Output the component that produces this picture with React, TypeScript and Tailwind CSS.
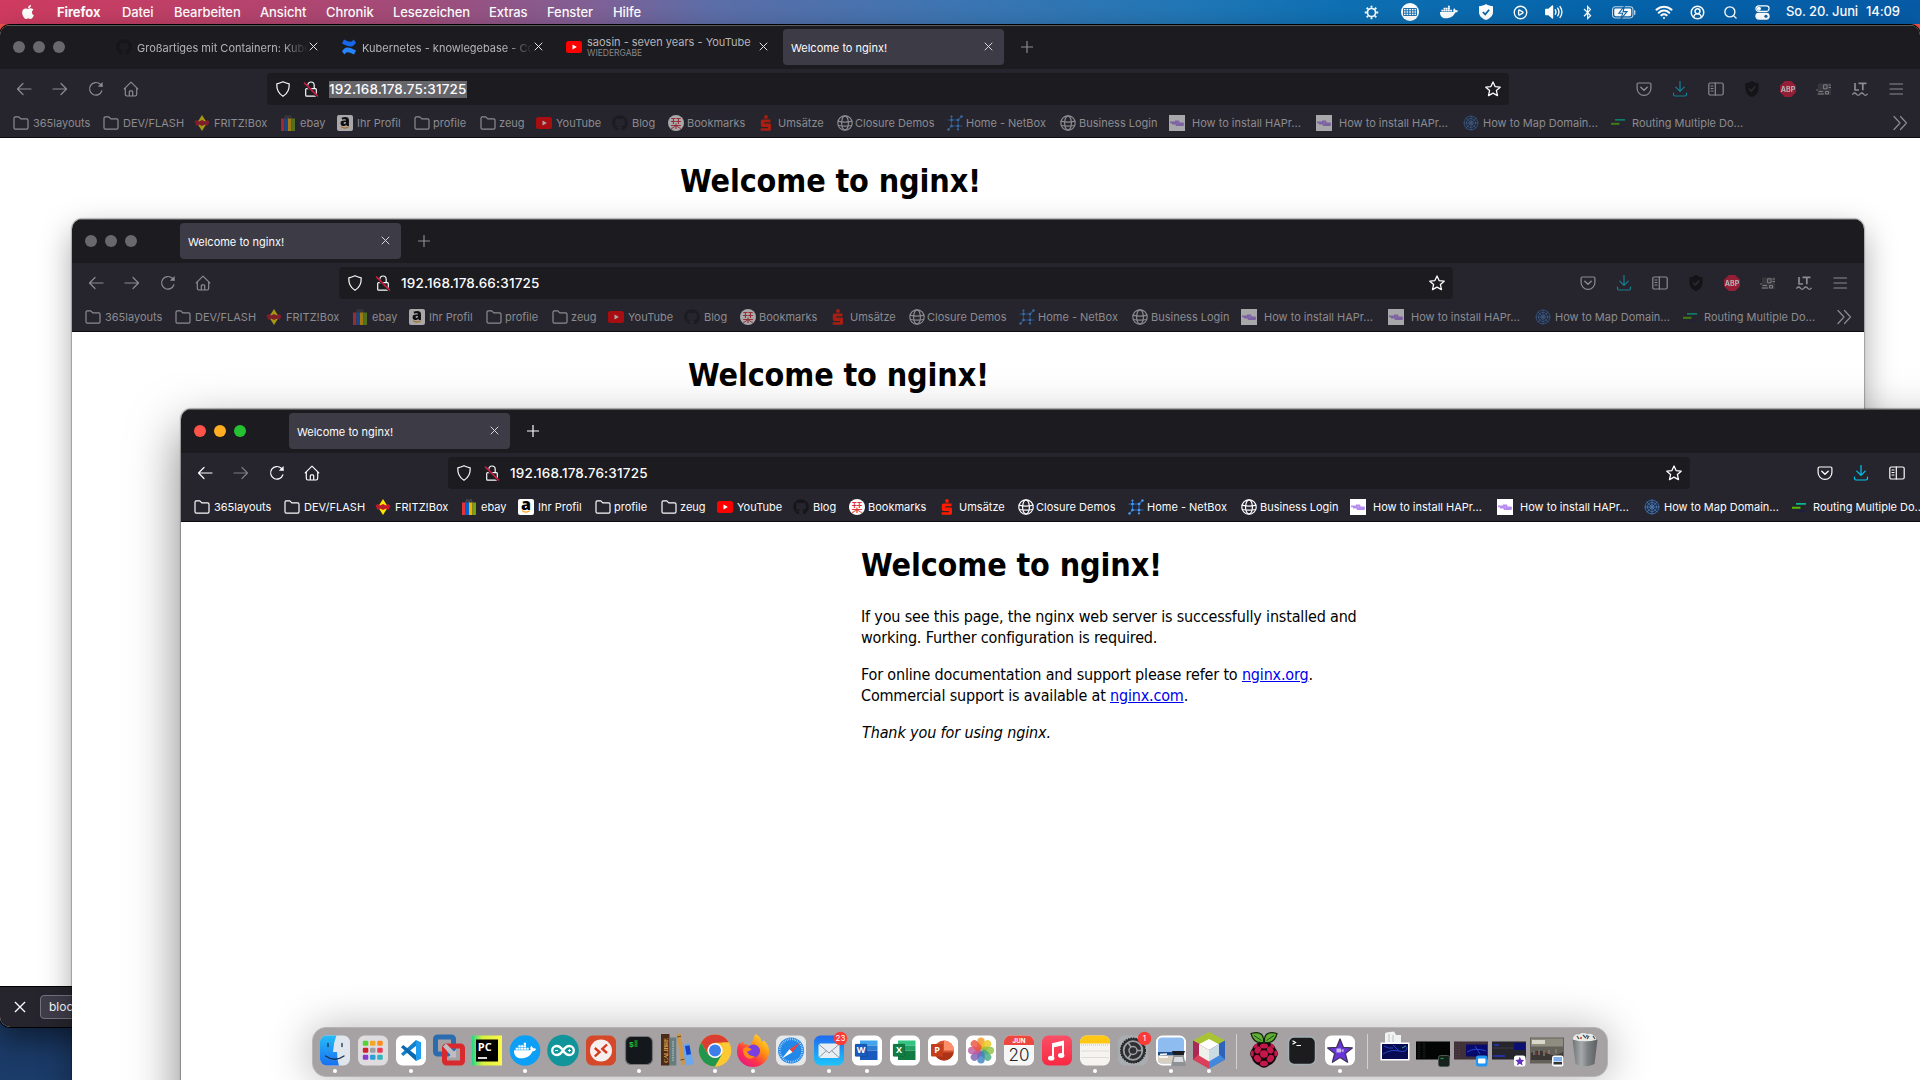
import React from "react";
import { FaApple, FaGithub, FaDocker, FaBluetoothB } from "react-icons/fa";
import { Search, CircleUserRound, CirclePlay, Wifi } from "lucide-react";

type Kids = { children?: React.ReactNode };

const S16 = ({ children, className = "size-4" }: Kids & { className?: string }) => (
  <svg viewBox="0 0 16 16" fill="none" stroke="currentColor" strokeWidth="1.2" strokeLinecap="round" strokeLinejoin="round" className={`${className} shrink-0`}>
    {children}
  </svg>
);

/* ---------- toolbar icons ---------- */

const Back = () => <S16><path d="M15 8H1.5M7 2.5 1.5 8 7 13.5" /></S16>;
const Forward = () => <S16><path d="M1 8h13.5M9 2.5 14.500 8 9 13.500" /></S16>;
const Reload = () => (
  <S16><path d="M13.900 9.800A6.300 6.300 0 1 1 12.300 3.300L14 5" /><path d="M14.600 1v4.800H9.800z" fill="currentColor" stroke="none" /></S16>
);
const Home = () => (
  <S16><path d="M2.300 6.800v6.500c0 1 .6 1.700 1.600 1.700h8.200c1 0 1.600-.7 1.600-1.700V6.800M1.200 7.900 8 1.100l6.800 6.800M6.300 15v-4.200c0-.6.300-1 .9-1h1.600c.6 0 .9.4.9 1V15" /></S16>
);
const Shield = () => (
  <S16><path d="M8 .8c2 .9 4 1.600 6.200 2C14.500 8.400 12.600 12.600 8 15.300 3.400 12.600 1.500 8.400 1.800 2.800 4 2.400 6 1.700 8 .8z" /></S16>
);
const Lock = () => (
  <S16>
    <path d="M4.800 7V4.200a3.200 3.200 0 0 1 6.400 0V7M3.600 7.600h8.800c.5 0 .9.400.9.900v5.800c0 .5-.4.900-.9.900H3.600c-.5 0-.9-.4-.9-.9V8.500c0-.5.4-.9.9-.9z" />
    <path d="M1.500 2.500l13 13" stroke="#26252c" strokeWidth="2.500" />
    <path d="M1.500 2l13 13" stroke="#e3173e" strokeWidth="1.400" />
  </S16>
);
const Star = () => (
  <S16><path d="M8 .9l2.100 4.700 5.100.6-3.800 3.400 1.100 5L8 12.100l-4.500 2.500 1.100-5L.8 6.200l5.100-.6z" strokeWidth="1.300" /></S16>
);
const Pocket = () => (
  <S16><path d="M2.300 2h11.400c.7 0 1.200.500 1.200 1.200v4.300a6.900 6.900 0 0 1-13.800 0V3.200C1.100 2.500 1.600 2 2.300 2z" /><path d="M4.800 6.200 8 9.300l3.200-3.100" strokeWidth="1.400" /></S16>
);
const Download = () => (
  <S16><path d="M8 .5v9.500M3.800 6.200 8 10.400l4.200-4.200M1.500 12v1.500c0 .9.600 1.500 1.500 1.500h10c.9 0 1.500-.6 1.500-1.500V12" /></S16>
);
const Sidebar = () => (
  <S16><rect x=".8" y="2" width="14.400" height="12" rx="1.500" /><path d="M7.300 2v12M3 5h2M3 7.500h2M3 10h2" /></S16>
);
const DarkShield = () => (
  <S16><path d="M8 .5c2 1.400 4 2 6 2.200v5C14 11.500 11.500 14 8 15.500 4.500 14 2 11.500 2 7.700v-5C4 2.500 6 1.900 8 .5z" fill="#151519" stroke="#151519" /><path d="M5.300 8l2 2 3.500-4" stroke="#2c2c31" strokeWidth="1.500" /></S16>
);
const Abp = () => (
  <span className="flex size-4 items-center justify-center bg-[#d11b3d] text-[7px] font-bold leading-none text-white [clip-path:polygon(30%_0,70%_0,100%_30%,100%_70%,70%_100%,30%_100%,0_70%,0_30%)]">ABP</span>
);
const NewsExt = () => (
  <S16><rect x="2" y="2.500" width="13" height="11.500" fill="#55555a" stroke="none" opacity=".35" /><g opacity=".85"><path d="M1 8.500v1M3 10.500h3.500M2 13h5.500M8 3.800h3v4H8zM13 4h1.500M13 6.500h1.500M10 10.500h2.500v2.500h-2.500z" strokeWidth="1" /></g></S16>
);
const Lt = () => (
  <S16><path d="M3 2v7h4M6.500 2.300h8M10.800 2.300V9.300" strokeWidth="1.700" strokeLinecap="butt" /><path d="M.8 13.200q1.800-2.400 3.600 0t3.600 0 3.600 0 3.600 0" strokeWidth="1.400" /></S16>
);
const Burger = () => <S16><path d="M2 3h12.500M2 8h12.500M2 13h12.500" /></S16>;
const Close = ({ className = "size-[10px]" }) => (
  <svg viewBox="0 0 10 10" stroke="currentColor" strokeWidth="1.100" className={className}><path d="M.8.8l8.400 8.400M9.200.8.800 9.200" /></svg>
);

/* ---------- bookmark icons ---------- */

const Folder = () => (
  <S16><path d="M1 12.800V3.200c0-.8.500-1.300 1.300-1.300h3.500l2 2h5.900c.8 0 1.300.5 1.300 1.300v7.600c0 .8-.5 1.300-1.300 1.300H2.300c-.8 0-1.300-.5-1.300-1.300z" /></S16>
);
const Fritz = () => (
  <S16><path d="M8 0l5 8-5 8-5-8z" fill="#ffe500" stroke="none" /><path d="M.500 6.200 3 5l2 1.500L8 5l3 1.500L13.500 5l2 2-2 4L11 9.500 8 11 5 9.500 2.500 11z" fill="#c9142b" stroke="none" /><path d="M4 7.500v2M7 7v2.500M10.500 7v2" stroke="#7c3a2a" strokeWidth=".8" /></S16>
);
const Ebay = () => (
  <S16><path d="M5 4c0-4.500 2.500-4.500 2.500 0M8.500 4c0-4.500 2.500-4.500 2.500 0" stroke="#4a4a4e" /><g stroke="none"><path d="M1 3.500h3.500V16H1z" fill="#e53238" /><path d="M4.500 3.500H8V16H4.500z" fill="#0064d2" /><path d="M8 3.500h3.500V16H8z" fill="#f5af02" /><path d="M11.500 3.500H15V16h-3.500z" fill="#6fa417" /></g></S16>
);
const Amazon = () => (
  <span className="flex size-4 flex-col items-center justify-center rounded-[2px] bg-white">
    <span className="-mt-[5px] h-[13px] font-['Open_Sans'] text-[16px] font-extrabold leading-[15px] text-black">a</span>
    <svg viewBox="0 0 12 4" className="h-[3px] w-[12px]" fill="none" stroke="#ff9900" strokeWidth="1.400"><path d="M.8.8q5 4 10.400 0" /></svg>
  </span>
);
const YouTube = () => (
  <S16><rect x="0" y="2" width="16" height="12" rx="2.500" fill="#ff0000" stroke="none" /><path d="M6.500 5.500v5L10.800 8z" fill="#fff" stroke="none" /></S16>
);
const Hub = () => <FaGithub className="size-4 text-[#16161a]" />;
const Shiori = () => (
  <span className="flex size-4 items-center justify-center rounded-full bg-white font-['Noto_Sans_CJK_JP'] text-[11px] font-medium leading-none text-[#e0353b]">栞</span>
);
const Sparkasse = () => (
  <S16><g fill="#ff1a00" stroke="none"><circle cx="8" cy="1.900" r="1.900" /><path d="M4.500 4.600h8v2.600H6.300v1.200h5.200c1 0 1.500.5 1.500 1.500v4c0 1.200-.7 1.900-1.900 1.900H2.700v-2.600h7.200v-1.300H4.500c-1.100 0-1.700-.6-1.700-1.700V6.400c0-1.100.6-1.800 1.700-1.800z" /></g></S16>
);
const Globe = () => (
  <S16><circle cx="8" cy="8" r="7.200" /><ellipse cx="8" cy="8" rx="3.400" ry="7.200" /><path d="M1 6.200q7 2 14 0M1.500 10.500q6.500 1.200 13 0" /></S16>
);
const NetBox = () => (
  <S16><g stroke="#1f6fc9" strokeWidth="1.100"><path d="M1 5h11M4.500 2v9M4.500 11h10.500M11 5v9M11 5l3.500-3.500M4.500 11 1.500 14.500" /></g><g fill="#4f9bea" stroke="none"><circle cx="4.500" cy="5" r="1.300" /><circle cx="11" cy="5" r="1.300" /><circle cx="4.500" cy="11" r="1.300" /><circle cx="11" cy="11" r="1.300" /><circle cx="14.500" cy="1.500" r="1.200" /><circle cx="1.500" cy="14.500" r="1.200" /><circle cx="11" cy="14.500" r="1.100" /><circle cx="4.500" cy="1.500" r="1.100" /></g></S16>
);
const HaProxy = () => (
  <S16><path d="M0 0h16v16H0z" fill="#fff" stroke="none" /><path d="M1 7.300h6M6 6.500h3.500v2H14V10H7.500V8.500H3" stroke="#b78cf2" strokeWidth="1.800" strokeLinecap="butt" /></S16>
);
const Mesh = () => (
  <S16><circle cx="8" cy="8" r="7.800" fill="#1b2c48" stroke="none" /><g stroke="#5580bb" strokeWidth=".8" strokeDasharray="1.200 1"><circle cx="8" cy="8" r="6.800" /><circle cx="8" cy="8" r="4.500" /><circle cx="8" cy="8" r="2" /><path d="M8 1v14M1 8h14M3 3l10 10M13 3 3 13" /></g></S16>
);
const Route = () => (
  <S16><g stroke="none"><path d="M5 4h10v1.700H5z" fill="#00b78f" /><path d="M1 7.800h8.500v2H1z" fill="#52b800" /><path d="M7 11.600h7v1.200H7z" fill="#1c1b4d" /></g></S16>
);

const bookmarks: [() => React.ReactElement, string, string][] = [
  [Folder, "365layouts", "w-[90px] gap-1"],
  [Folder, "DEV/FLASH", "w-[91px] gap-1"],
  [Fritz, "FRITZ!Box", "w-[86px] gap-1"],
  [Ebay, "ebay", "w-[57px] gap-1"],
  [Amazon, "Ihr Profil", "w-[77px] gap-1"],
  [Folder, "profile", "w-[66px] gap-[3px]"],
  [Folder, "zeug", "w-[56px] gap-[3px]"],
  [YouTube, "YouTube", "w-[76px] gap-1"],
  [Hub, "Blog", "w-[56px] gap-1"],
  [Shiori, "Bookmarks", "w-[90px] gap-[3px]"],
  [Sparkasse, "Umsätze", "w-[79px] gap-1"],
  [Globe, "Closure Demos", "w-[110px] gap-[2px]"],
  [NetBox, "Home - NetBox", "w-[113px] gap-[3px]"],
  [Globe, "Business Login", "w-[109px] gap-[3px]"],
  [HaProxy, "How to install HAPr...", "w-[147px] gap-[7px]"],
  [HaProxy, "How to install HAPr...", "w-[147px] gap-[7px]"],
  [Mesh, "How to Map Domain...", "w-[147px] gap-[4px]"],
  [Route, "Routing Multiple Do...", "w-[140px] gap-[6px]"],
];

/* ---------- browser window ---------- */

type Tab = { title: string; sub?: string; icon?: React.ReactNode; selected?: boolean };

const TabItem = ({ tab }: { tab: Tab }) => (
  <div className={`flex h-9 w-[221px] shrink-0 items-center rounded pl-2 pr-[11px] ${tab.selected ? "bg-[#3d3b46] text-[#fbfbfe]" : "text-[#b4b4b8]"}`}>
    {tab.icon && <span className="mr-[5px] flex size-4 shrink-0 items-center justify-center">{tab.icon}</span>}
    <div className={`min-w-0 flex-1 overflow-hidden whitespace-nowrap leading-[14px] ${tab.sub ? "-mt-px" : "mt-px"} ${tab.selected || tab.sub ? "" : "[mask-image:linear-gradient(to_right,black_85%,transparent)]"}`}>
      {tab.title}
      {tab.sub && <div className="text-[8.500px] leading-[9px] text-[#88888c]">{tab.sub}</div>}
    </div>
    <span className={`-mt-px ml-px ${tab.selected ? "text-[#d8d8dc]" : "text-[#e8e8ec]"}`}><Close className="size-[9px]" /></span>
  </div>
);

type WinProps = { tabs: Tab[]; url: string; active?: boolean; highlighted?: boolean; className: string; children: React.ReactNode };

const BrowserWindow = ({ tabs, url, active, highlighted, className, children }: WinProps) => {
  const dim = active ? "text-[#fbfbfe]" : "text-[#8b8b90]";
  return (
    <section className={`absolute flex flex-col overflow-hidden bg-white font-['Inter'] text-[11px] ${className}`}>
      <div className="flex h-11 shrink-0 items-center border-t border-[#5b5b5e] bg-[#1c1b20] pb-px">
        <div className="ml-[13px] flex w-[95px] items-center gap-2">
          <i className={`size-3 rounded-full ${active ? "bg-[#ff5249]" : "bg-[#69686b]"}`} />
          <i className={`size-3 rounded-full ${active ? "bg-[#ffae22]" : "bg-[#69686b]"}`} />
          <i className={`size-3 rounded-full ${active ? "bg-[#25c131]" : "bg-[#69686b]"}`} />
        </div>
        <div className="flex gap-1">{tabs.map((t) => <TabItem key={t.title} tab={t} />)}</div>
        <svg viewBox="0 0 12 12" className={`ml-[17px] size-3 ${dim}`} stroke="currentColor" strokeWidth="1.200"><path d="M6 0v12M0 6h12" /></svg>
      </div>
      <div className={`flex h-10 shrink-0 items-center bg-[#26252d] pr-4 ${dim}`}>
        <div className="flex w-[267px] items-center gap-5 pl-4">
          <Back /><span className={active ? "opacity-40" : ""}><Forward /></span><Reload /><span className="-ml-px"><Home /></span>
        </div>
        <div className="flex h-8 flex-1 items-center rounded bg-[#1c1b20] pl-2 pr-2 text-[#fbfbfe]">
          <Shield />
          <span className="ml-3"><Lock /></span>
          <span className={`ml-[10px] mt-px text-[13.500px] font-medium leading-[17px] tracking-[0.170px] ${highlighted ? "bg-[#66656a]" : ""}`}>{url}</span>
          <span className="ml-auto"><Star /></span>
        </div>
        <div className="ml-[127px] flex items-center gap-5">
          <Pocket />
          <span className={active ? "text-[#00c8f0]" : "text-[#147f93]"}><Download /></span>
          <Sidebar /><DarkShield />
          <span className={active ? "" : "opacity-65"}><Abp /></span>
          <NewsExt /><Lt /><Burger />
        </div>
      </div>
      <div className={`flex h-[29px] shrink-0 items-start border-b border-[#0c0c0f] bg-[#26252d] pl-[13px] pt-[6px] ${dim}`}>
        {bookmarks.map(([Icon, label, cls], i) => (
          <div key={i} className={`flex shrink-0 items-center whitespace-nowrap ${cls}`}>
            <span className={`flex ${active || Icon === Folder || Icon === Globe ? "" : "opacity-60"}`}><Icon /></span>
            <span className="leading-4">{label}</span>
          </div>
        ))}
        <span className="ml-auto mr-3">
          <S16><path d="M2 1.500 8 8l-6 6.500M8.500 1.500l6 6.500-6 6.500" /></S16>
        </span>
      </div>
      {children}
    </section>
  );
};

const NginxPage = () => (
  <main className="mx-auto w-[560px] flex-1 whitespace-nowrap font-['DejaVu_Sans_Condensed','DejaVu_Sans',sans-serif] text-[16px] leading-[21px] tracking-[-0.175px] text-black [font-stretch:condensed]">
    <h1 className="mt-6 text-[32px] font-bold leading-[39px] tracking-[-0.120px]">Welcome to nginx!</h1>
    <p className="mt-[21px]">If you see this page, the nginx web server is successfully installed and<br />working. Further configuration is required.</p>
    <p className="mt-4">
      For online documentation and support please refer to <a className="text-[#0000ee] underline">nginx.org</a>.<br />
      Commercial support is available at <a className="text-[#0000ee] underline">nginx.com</a>.
    </p>
    <p className="mt-4 pl-px italic tracking-[-0.120px]">Thank you for using nginx.</p>
  </main>
);

/* ---------- menu bar ---------- */

const menus: [string, string][] = [
  ["Firefox", "w-[65px] font-bold"], ["Datei", "w-[52px]"], ["Bearbeiten", "w-[86px]"], ["Ansicht", "w-[66px]"], ["Chronik", "w-[67px]"],
  ["Lesezeichen", "w-[96px]"], ["Extras", "w-[58px]"], ["Fenster", "w-[66px]"], ["Hilfe", "w-[40px]"],
];

const MenuBar = () => (
  <header className="flex h-6 items-center whitespace-nowrap font-['Inter'] text-[13px] font-medium tracking-[-0.100px] text-white">
    <FaApple className="ml-[20px] mr-[21px] size-[16px]" />
    {menus.map(([m, c]) => <span key={m} className={`mt-px ${c}`}>{m}</span>)}
    <div className="ml-auto flex items-center">
      <div className="flex w-[34px] justify-center">
        <svg viewBox="0 0 16 16" className="size-[15px]" fill="none" stroke="#fff"><circle cx="8" cy="8" r="4.300" strokeWidth="1.800" /><g strokeWidth="2"><path d="M8 .8V3M8 13v2.200M.8 8H3M13 8h2.200M2.900 2.900l1.500 1.500M11.600 11.600l1.500 1.500M13.100 2.900l-1.500 1.500M4.400 11.600l-1.500 1.500" /></g></svg>
      </div>
      <div className="flex w-[43px] justify-center">
        <svg viewBox="0 0 18 18" className="size-[18px]"><circle cx="9" cy="9" r="9" fill="#fff" /><path d="M2.500 5.500h13v7h-13zM2.500 7.800h13M2.500 10.200h13M5 5.500v7M7.700 5.500v7M10.400 5.500v7M13 5.500v7" stroke="#0b66ab" fill="none" strokeWidth=".9" /></svg>
      </div>
      <div className="flex w-[35px] justify-center"><FaDocker className="size-[18px]" /></div>
      <div className="flex w-[39px] justify-center">
        <svg viewBox="0 0 16 16" className="size-4"><path d="M8 0c2 1.400 4.500 2 7 2.200V8c0 4-3 6.500-7 8-4-1.500-7-4-7-8V2.200C3.500 2 6 1.400 8 0z" fill="#fff" /><path d="M4.800 8l2.400 2.400 4-4.600" stroke="#0b66ab" strokeWidth="1.700" fill="none" /></svg>
      </div>
      <div className="flex w-[30px] justify-center"><CirclePlay className="size-[15px]" strokeWidth={2.200} /></div>
      <div className="flex w-[38px] justify-center">
        <svg viewBox="0 0 18 14" className="h-[14px] w-[18px]" fill="none" stroke="#fff" strokeWidth="1.400" strokeLinecap="round"><path d="M.8 4.500h2.700L7.500 1v12L3.500 9.500H.8z" fill="#fff" strokeLinejoin="round" /><path d="M10.300 4.800q1.300 2.200 0 4.400M12.700 3.200q2.500 3.800 0 7.600M15.100 1.600q3.600 5.400 0 10.800" /></svg>
      </div>
      <div className="flex w-[28px] justify-center"><FaBluetoothB className="size-[15px]" /></div>
      <div className="flex w-[46px] justify-center">
        <svg viewBox="0 0 26 14" className="h-[13px] w-[26px]" fill="none" stroke="#fff"><rect x=".6" y=".8" width="22" height="12" rx="3" strokeWidth="1.100" opacity=".75" /><rect x="2.500" y="2.600" width="18.200" height="8.400" rx="1.500" fill="#fff" stroke="none" /><path d="M13.500 0 7.500 7.800h4L9.800 14l6.400-8H12z" fill="#fff" stroke="#0b66ab" strokeWidth="1.200" /><path d="M24.500 5v4" strokeWidth="1.500" strokeLinecap="round" opacity=".75" /></svg>
      </div>
      <div className="flex w-[34px] justify-center"><Wifi className="size-[18px]" strokeWidth={2.800} /></div>
      <div className="flex w-[33px] justify-center"><CircleUserRound className="size-[15px]" strokeWidth={2.400} /></div>
      <div className="flex w-[32px] justify-center"><Search className="size-[15px]" strokeWidth={2.200} /></div>
      <div className="flex w-[32px] justify-center">
        <svg viewBox="0 0 16 16" className="size-[15px]" fill="none" stroke="#fff" strokeWidth="1.300"><rect x="1" y="1" width="14" height="5.800" rx="2.900" /><circle cx="4.200" cy="3.900" r="1.500" fill="#fff" /><rect x="1" y="9" width="14" height="6" rx="3" fill="#fff" /><circle cx="11.700" cy="12" r="1.700" fill="#0b60a8" stroke="none" /></svg>
      </div>
      <span className="ml-2 w-[80px]">So. 20. Juni</span>
      <span className="w-[54px]">14:09</span>
    </div>
  </header>
);

/* ---------- dock ---------- */

const D = ({ children }: Kids) => <svg viewBox="0 0 32 32" className="size-8 shrink-0 overflow-visible">{children}</svg>;
const Tile = ({ fill = "#fff" }) => <rect x="1" y="1.500" width="30" height="30" rx="6.500" fill={fill} />;

const Finder = () => (
  <D><defs><linearGradient id="fnd" x2="0" y2="1"><stop stopColor="#26c0f8" /><stop offset="1" stopColor="#1a6ef0" /></linearGradient><clipPath id="fc"><rect x="1" y="1.500" width="30" height="30" rx="6.500" /></clipPath></defs>
    <g clipPath="url(#fc)"><path d="M0 0h32v32H0z" fill="#dfe6ee" /><path d="M0 0h18q-3.500 8-4 18h4q0 7 2 14H0z" fill="url(#fnd)" /></g>
    <path d="M9 9.500v3M23 9.500v3M6.500 22q9.500 6.500 18.500 0" fill="none" stroke="#193050" strokeWidth="1.300" strokeLinecap="round" /></D>
);
const pads = ["#52d337", "#f5a623", "#ff8c1a", "#d0202d", "#9aa0a6", "#ee3a55", "#8a3ad0", "#2d9cdb", "#2fb5c0"];
const Launchpad = () => <D><Tile fill="#dedcdf" />{pads.map((p, i) => <rect key={i} x={5.800 + (i % 3) * 7.200} y={6.800 + Math.floor(i / 3) * 7} width="5.500" height="5" rx="1.300" fill={p} />)}</D>;
const VsCode = () => <D><Tile /><path d="M21 6l5 2.200v16.600L21 27z" fill="#1f9cf0" /><path d="M21 6v6L8.200 22 6 19.800z" fill="#1580cc" /><path d="M21 27v-6L8.200 11 6 13.200z" fill="#0a69ad" /></D>;
const Vmware = () => (
  <D><rect x="2.500" y="3" width="18" height="17" rx="2" fill="none" strokeWidth="5" stroke="#2b6cb0" /><rect x="11.500" y="12" width="18" height="17" rx="2" fill="none" strokeWidth="5" stroke="#d8292f" /><path d="M10 12.500l3-3 8 8 2-2v8h-8l2.500-2.500z" fill="#c0bdc2" /></D>
);
const PyCharm = () => (
  <D><defs><linearGradient id="pyc" x2="1"><stop stopColor="#21d789" /><stop offset=".35" stopColor="#d9f03e" /><stop offset="1" stopColor="#fcf84a" /></linearGradient></defs><path d="M1 1.500h30v30H1z" fill="url(#pyc)" /><path d="M5 5.500h22v22H5z" fill="#000" /><text x="6.800" y="16.800" fontSize="11" fontWeight="700" fill="#fff" fontFamily="Open Sans">PC</text><path d="M7 24h9" stroke="#fff" strokeWidth="1.700" /></D>
);
const DockerApp = () => <D><circle cx="16" cy="16.500" r="15.300" fill="#0c9ff5" /><g transform="translate(5 5.500)"><FaDocker size={22} color="#fff" /></g></D>;
const Arduino = () => <D><circle cx="16" cy="16.500" r="15.800" fill="#12959a" /><path d="M16 16.500c-2.600-4-4.500-4.500-6.300-4.500a4.500 4.500 0 0 0 0 9c1.800 0 3.700-.5 6.300-4.500 2.600-4 4.500-4.500 6.300-4.500a4.500 4.500 0 0 1 0 9c-1.800 0-3.700-.5-6.300-4.500z" fill="none" stroke="#fff" strokeWidth="2.300" /><path d="M8 16.500h3M21 16.500h3M22.500 15v3" stroke="#fff" /></D>;
const Remote = () => <D><Tile fill="#d5482a" /><circle cx="16" cy="16.500" r="11" fill="#f5efee" /><path d="M9.800 14l4.700 4-4.700 4.500M22 10.500l-4.700 4.500 4.700 4" stroke="#d5391f" strokeWidth="2.400" fill="none" /></D>;
const Iterm = () => <D><rect x="2.500" y="2.500" width="27" height="28" rx="5.500" fill="#14181c" stroke="#747478" strokeWidth="1.200" /><text x="6" y="13" fontSize="8" fontWeight="700" fill="#23c43b" fontFamily="Liberation Mono">$</text><path d="M11.500 6h3v7h-3z" fill="#137c22" /></D>;
const Calibre = () => (
  <D><path d="M0 0h8.500v31.500H0z" fill="#4b2a17" /><text transform="translate(7 29) rotate(-90)" fontSize="6.500" fontWeight="700" fill="#d9a14a" fontFamily="Liberation Serif" textLength="25">CALIBRE</text><path d="M8.800 3.500h6.500v28H8.800z" fill="#667d80" /><path d="M12 7v20" stroke="#a5b5b5" strokeWidth="1.500" strokeDasharray="1.500 .8" /><path d="M15.500 0l4-.8 5 31.200-4 .6z" fill="#c9964c" /><path d="M16 3l4-.8M19.500 26l4-.8" stroke="#6c4420" /><path d="M22 10.500l6-1 5 20.500-8.500 1.500z" fill="#6aa7ef" /><path d="M24 12l4.500-.8 1.500 9-4.500.8z" fill="#1646c7" /></D>
);
const Chrome = () => <D><circle cx="16" cy="16.500" r="16" fill="#fbbf1c" /><path d="M2.100 8.500a16 16 0 0 1 27.800 0L16 8.800 9.500 21z" fill="#da3d31" /><path d="M2.100 8.500a16 16 0 0 0 13.900 24l7-12L9.500 21z" fill="#23964e" /><path d="M16 32.500l7-12V8.500h6.900a16 16 0 0 1-13.900 24z" fill="#fcc934" /><circle cx="16" cy="16.500" r="7.600" fill="#fff" /><circle cx="16" cy="16.500" r="6" fill="#3d7eea" /></D>;
const Firefox = () => (
  <D><defs><linearGradient id="ffx" x1="1" x2=".2" y2="1"><stop stopColor="#fff44f" /><stop offset=".4" stopColor="#ff980e" /><stop offset=".7" stopColor="#ff3647" /><stop offset="1" stopColor="#e31587" /></linearGradient></defs>
    <path d="M18.500 0c4 2 5.500 4.500 6 7.500 1.500 0 2-.5 2-1.500 4 3.500 5.500 7 5.500 11.500a16 15.500 0 0 1-32 0c0-4 1-7 3-9.500l.5 2c1-1.500 2-2 3-2.500v3c2-.5 5 0 7 1.500 2-2 2-8 5-12z" fill="url(#ffx)" /><circle cx="16.500" cy="17" r="6.500" fill="#7a3fe0" /><path d="M6 15c3-3 6-2 9 .5-2 .5-3 2-5 2 1 3 4 5.500 8 4.500-4 5-12 3-12-7z" fill="#ff8a16" /></D>
);
const Safari = () => <D><Tile fill="#e6e8ea" /><circle cx="16" cy="16.500" r="13" fill="#2187e8" /><circle cx="16" cy="16.500" r="11.300" fill="none" stroke="#d5ecff" strokeWidth="2" strokeDasharray=".6 1.200" /><path d="M25 8.500l-7.500 9.700-3-3z" fill="#f0403a" /><path d="M7 24.500l7.500-9.300 3 3z" fill="#fff" /></D>;
const Badge = ({ n }: { n: string }) => <g><circle cx="27.500" cy="4.500" r="6.800" fill="#fb3c36" /><text x="27.500" y="7.300" textAnchor="middle" fontSize="8" fill="#fff" fontFamily="Inter">{n}</text></g>;
const Mail = () => <D><defs><linearGradient id="ml" x2="0" y2="1"><stop stopColor="#1f6af0" /><stop offset="1" stopColor="#1fc4fb" /></linearGradient></defs><Tile fill="url(#ml)" /><rect x="5.500" y="9.500" width="21" height="14.500" rx="2" fill="#e9eef2" /><path d="M6 10.500l10 8.500 10-8.500M6 23.500l7.500-7M26 23.500l-7.500-7" stroke="#8b99a5" fill="none" /><Badge n="23" /></D>;
const office = (letter: string, a: string, b: string, c: string) => () => (
  <D><Tile /><path d="M9 6.500h17.500v5H9z" fill={a} /><path d="M9 11.500h17.500v5H9z" fill={b} /><path d="M9 16.500h17.500v9.500H9z" fill={c} /><rect x="4" y="10" width="12" height="12.500" rx="1" fill={c} stroke="#0003" strokeWidth=".6" /><text x="10" y="19.300" textAnchor="middle" fontSize="9" fontWeight="700" fill="#fff" fontFamily="Open Sans">{letter}</text></D>
);
const Word = office("W", "#41a5ee", "#2b7cd3", "#185abd");
const Excel = office("X", "#33c481", "#21a366", "#107c41");
const Ppt = () => <D><Tile /><circle cx="17" cy="16.500" r="10" fill="#d35230" /><path d="M17 6.500a10 10 0 0 1 10 10H17z" fill="#ff8f6b" /><path d="M7.200 18.500h19.600a10 10 0 0 1-19.600 0z" fill="#ad3318" /><rect x="4" y="10" width="12" height="12.500" rx="1" fill="#c43e1c" /><text x="10" y="19.300" textAnchor="middle" fontSize="9" fontWeight="700" fill="#fff" fontFamily="Open Sans">P</text></D>;
const petals = ["#f89a1c", "#e8c81e", "#8fc13e", "#45a982", "#3b82c4", "#7b62b5", "#c05a9c", "#ea5440"];
const Photos = () => <D><Tile />{petals.map((p, i) => <rect key={p} x="12.300" y="3.500" width="7.400" height="12.500" rx="3.700" fill={p} opacity=".82" transform={`rotate(${i * 45} 16 16.500)`} />)}</D>;
const Calendar = () => <D><Tile fill="#f7f6f6" /><path d="M1 11V8a6.500 6.500 0 0 1 6.500-6.500h17A6.500 6.500 0 0 1 31 8v3z" fill="#ed4840" /><text x="16" y="8.800" textAnchor="middle" fontSize="6.200" fontWeight="700" fill="#fff" fontFamily="Inter">JUN</text><text x="16" y="26.500" textAnchor="middle" fontSize="17" fill="#222" fontWeight="300" fontFamily="Inter">20</text></D>;
const Music = () => <D><defs><linearGradient id="mus" x2="0" y2="1"><stop stopColor="#fb4f67" /><stop offset="1" stopColor="#fa2843" /></linearGradient></defs><Tile fill="url(#mus)" /><g fill="#fff"><path d="M11 9.200 23 6.500v14.800h-2V11.500l-8 1.800v11.200h-2z" /><ellipse cx="10.200" cy="24.200" rx="3.200" ry="2.400" /><ellipse cx="20.200" cy="21.500" rx="3.200" ry="2.400" /></g></D>;
const Notes = () => <D><Tile fill="#f6f4f0" /><path d="M1 9.500V8a6.500 6.500 0 0 1 6.500-6.500h17A6.500 6.500 0 0 1 31 8v1.500z" fill="#fdc713" /><path d="M2 11h28" stroke="#aaa" strokeDasharray="1 1" strokeWidth=".7" /><path d="M2 17h28M2 23.500h28" stroke="#d9d6d2" strokeWidth=".8" /></D>;
const Settings = () => <D><Tile fill="#a8adb1" /><circle cx="16" cy="16.500" r="12.300" fill="#2d2f31" stroke="#1f2021" strokeWidth="1.500" strokeDasharray="1.500 1" /><circle cx="16" cy="16.500" r="9.300" fill="none" stroke="#9da1a4" strokeWidth="1.800" /><circle cx="16" cy="16.500" r="4" fill="none" stroke="#9da1a4" strokeWidth="1.500" /><path d="M20 16.500h5M14 13l-3-4.500M14 20l-3 4.500" stroke="#9da1a4" strokeWidth="1.600" /><Badge n="1" /></D>;
const Preview = () => <D><Tile /><rect x="3" y="3.500" width="26" height="26" rx="4" fill="#8fbcf0" /><path d="M3 18h26v3.500H3z" fill="#1d4a80" /><path d="M3 21.500h26v4.500q0 3.500-4 3.500H7q-4 0-4-3.500z" fill="#d8cfc0" /><path d="M4 23h9M5 20.500l7-.5" stroke="#fff" strokeWidth="1.500" /><path d="M17 17h13l-1.500 4h-10z" fill="#1b1c1f" /><path d="M18.500 21h10l2.500 11H16z" fill="#8f9295" /><path d="M19.500 23h8l1 5h-10z" fill="#d9dcde" /></D>;
const NetBeans = () => <D><path d="M16-2 32 6.500 16 15 0 6.500z" fill="#a9c433" /><path d="M0 6.500 16 15v19.500L0 25.500z" fill="#a92a55" /><path d="M0 25.500 6 20l10 7v7.500z" fill="#dc3f5b" /><path d="M32 6.500 16 15v19.500l16-9z" fill="#2d63b8" /><path d="M16 27l10-7 6 5.500-16 9z" fill="#4288de" /><path d="M16 5l10 5.200L16 16 6 10.200z" fill="#fff" /><path d="M6 10.200 16 16v11.500L6 21.500z" fill="#eef2ea" /><path d="M26 10.200 16 16v11.500l10-6z" fill="#cbdbe4" /></D>;
const Pi = () => (
  <D>
    <path d="M16 8.500C10 7.500 5 11 4.300 15 1.800 17.500 1.500 21 3.700 23.500 4.500 27.500 7.500 30 11 31.500q5 4.500 10 0c3.500-1.500 6.500-4 7.300-8 2.200-2.500 1.900-6-.6-8.500C27 11 22 7.500 16 8.500z" fill="#16090d" />
    <path d="M15.500 8.500Q5.500 10 3-.5 14-3.500 15.500 4.500zM16.500 8.500Q26.500 10 29-.5 18-3.500 16.500 4.500z" fill="#5fae35" stroke="#16240d" strokeWidth="1.200" />
    <path d="M6 1.500l7.500 5M26 1.500l-7.500 5" stroke="#1c3d12" strokeWidth=".9" />
    <g fill="#c5174a"><ellipse cx="16" cy="12" rx="4" ry="2.500" /><ellipse cx="16" cy="20" rx="4" ry="3.700" /><ellipse cx="9.800" cy="16" rx="3" ry="3.700" transform="rotate(35 9.800 16)" /><ellipse cx="22.200" cy="16" rx="3" ry="3.700" transform="rotate(-35 22.200 16)" /><ellipse cx="9.500" cy="24.500" rx="3.200" ry="3.900" transform="rotate(-35 9.500 24.500)" /><ellipse cx="22.500" cy="24.500" rx="3.200" ry="3.900" transform="rotate(35 22.500 24.500)" /><ellipse cx="16" cy="29.500" rx="4" ry="2.800" /><ellipse cx="4.300" cy="19.500" rx="1.500" ry="3" /><ellipse cx="27.700" cy="19.500" rx="1.500" ry="3" /><ellipse cx="7.500" cy="12" rx="2.500" ry="1.500" transform="rotate(-45 7.500 12)" /><ellipse cx="24.500" cy="12" rx="2.500" ry="1.500" transform="rotate(45 24.500 12)" /></g>
  </D>
);
const Terminal = () => <D><rect x="2.500" y="3" width="27" height="27.500" rx="5.500" fill="#1c1c1e" stroke="#a3afb5" strokeWidth="1.500" /><path d="M6.500 6.800 9.500 8.500l-3 1.700M10.500 11.500h4.500" stroke="#fff" strokeWidth="1.200" fill="none" /></D>;
const IMovie = () => <D><Tile /><path d="M16 5l3.300 8.300 9 .6-7 5.600 2.300 8.700L16 23.500l-7.600 4.700 2.300-8.700-7-5.600 9-.6z" fill="#6a35d8" stroke="#3f3358" strokeWidth="1.300" strokeLinejoin="round" /><path d="M12.500 14.500h4.500v4h-4.500zM17.500 16l2-1v3.200l-2-1z" fill="#c8b9ee" /></D>;
const Printer = () => <D><path d="M6 0q0-1.500 1.500-1.500L15-2.500l2 3.500h5v8H6z" fill="#f1f2f2" /><path d="M10 0v8M14 1v7" stroke="#c7c9ca" strokeWidth="1.200" /><path d="M1.500 8.500h29v18h-29z" fill="#fff" /><path d="M3 10h26v15H3z" fill="#080a52" /><path d="M4 20q8-5 16-3t8-4M14 11l6 6M5 12q5 3 9 2" stroke="#2644c5" fill="none" /><path d="M23 14l4-2" stroke="#2fa88f" /></D>;
const Mini = ({ children, bg }: Kids & { bg: string }) => <D><rect x="-1" y="7.500" width="34" height="18" fill={bg} />{children}</D>;
const ThumbA = () => <Mini bg="#030404"><path d="M2 9v15M7 9v15" stroke="#1d2322" strokeWidth="3" strokeDasharray=".8 1" /><rect x="21.500" y="21.500" width="11" height="11" rx="2" fill="#16221d" stroke="#4b5852" /><path d="M23.500 24.500h3" stroke="#209b3b" strokeWidth="1.200" /></Mini>;
const ThumbB = () => <Mini bg="#403039"><path d="M11 10.500h21v12H11z" fill="#080a6b" /><path d="M12 18q8-5 19-1M20 12l5 8" stroke="#2545d8" fill="none" /><path d="M1 10v14M4 10v14" stroke="#5b4a53" strokeDasharray="1 1.500" /><rect x="21" y="21.500" width="11.500" height="11" rx="2.500" fill="#2195f2" /><rect x="23" y="24.500" width="7.500" height="5" rx="1" fill="#fff" /></Mini>;
const ThumbC = () => <Mini bg="#25252b"><path d="M21 9h11v7H21z" fill="#0b0e73" /><path d="M1 11h5M0 22h12" stroke="#2334c4" strokeWidth="1.500" /><path d="M0 14h20" stroke="#3b3b44" /><rect x="21" y="21.500" width="11.500" height="11" rx="2.500" fill="#fff" /><path d="M26.800 22.800l1.300 3 3.200.3-2.400 2.200.7 3.200-2.800-1.700-2.800 1.700.7-3.200-2.400-2.200 3.200-.3z" fill="#6030c0" /></Mini>;
const ThumbD = () => <D><path d="M-1 3.500h34v26H-1z" fill="#63615a" /><path d="M0 4.500h32v8H0z" fill="#8f8d80" /><path d="M1 6h13v4H1z" fill="#d7d7ca" /><path d="M0 19q8-5 16 0t16-1v8H0z" fill="#3c3836" /><path d="M3 17v4M8 16v5M13 17v5M18 16v4M25 15v4" stroke="#8f887d" strokeWidth="1.200" /><path d="M5 18v3M15 17v3" stroke="#9a3b33" /><rect x="21" y="21.500" width="11.500" height="11" rx="2.500" fill="#fff" /><path d="M22.500 23h8.500v4.500h-8.500z" fill="#7fb0ea" /><path d="M22.500 28h8.500v2.500h-8.500z" fill="#333" /></D>;
const Trash = () => <D><defs><linearGradient id="trh" x2="1"><stop stopColor="#6f7376" /><stop offset=".35" stopColor="#a6aaac" /><stop offset=".6" stopColor="#7d8183" /><stop offset="1" stopColor="#5b5f62" /></linearGradient></defs><path d="M4 4q2-5 6-3.500Q14-2 18 0q5-1.500 9 3.500v4H4z" fill="#e9e9e6" /><path d="M8 2l2 3M14 1l3 3M20 2l-2 3M24 2l2 3" stroke="#484c50" strokeWidth="1.300" /><path d="M11 4h2" stroke="#d86a2e" strokeWidth="2" /><path d="M17 2h2" stroke="#3f8bd0" strokeWidth="2" /><path d="M3.500 5.500q12.500 4 25 0l-3 24.500q-9.500 4.500-19 0z" fill="url(#trh)" /></D>;

type DockEntry = [() => React.ReactElement, boolean?];
const apps: DockEntry[] = [
  [Finder, true], [Launchpad], [VsCode, true], [Vmware], [PyCharm], [DockerApp, true], [Arduino], [Remote], [Iterm, true], [Calibre], [Chrome, true], [Firefox, true],
  [Safari], [Mail, true], [Word, true], [Excel], [Ppt], [Photos], [Calendar], [Music], [Notes, true], [Settings], [Preview, true], [NetBeans, true],
];
const extras: DockEntry[] = [[Pi], [Terminal], [IMovie, true]];
const stacks: DockEntry[] = [[Printer], [ThumbA], [ThumbB], [ThumbC], [ThumbD], [Trash]];

const DockGroup = ({ items }: { items: DockEntry[] }) => (
  <div className="flex">
    {items.map(([Icon, running], i) => (
      <div key={i} className="flex w-[38px] flex-col items-center gap-[3px]">
        <Icon />
        {running && <i className="size-1 rounded-full bg-white" />}
      </div>
    ))}
  </div>
);
const Divider = () => <div className="flex w-[17px] justify-center"><i className="h-[35px] w-px bg-[#d3d0d1]" /></div>;

export default function App() {
  return (
    <div className="relative h-[1080px] w-[1920px] overflow-hidden bg-[linear-gradient(180deg,#f0524a_0%,#f0524a_5%,#1d3865_60%,#1b3b68_100%)]">
      <div className="bg-[linear-gradient(90deg,#d03b60_0%,#bd4169_10%,#a14d7b_22%,#7f6197_31%,#5d6ea8_37%,#3c76b3_50%,#2177b6_62%,#0e70b3_70%,#0563aa_85%,#075ba6_100%)]">
        <MenuBar />
      </div>

      <BrowserWindow
        className="left-0 top-[25px] h-[1002px] w-[1920px] rounded-[10px] shadow-[0_0_0_1px_#000,0_12px_30px_rgba(0,0,0,0.5)]"
        url="192.168.178.75:31725"
        highlighted
        tabs={[
          { title: "Großartiges mit Containern: Kubernetes", icon: <Hub /> },
          { title: "Kubernetes - knowlegebase - Confluence", icon: <S16><g stroke="none"><path d="M1 12.500C4 7.500 7 7.500 15 11.500l-2 4C7 12.500 5.500 12.500 3.500 15.500z" fill="#2684ff" /><path d="M15 3.500C12 8.500 9 8.500 1 4.500l2-4c6 3 7.500 3 9.500 0z" fill="#1668e8" /></g></S16> },
          { title: "saosin - seven years - YouTube", sub: "WIEDERGABE", icon: <YouTube /> },
          { title: "Welcome to nginx!", selected: true },
        ]}
      >
        <NginxPage />
        <div className="flex h-[41px] shrink-0 items-center gap-[13px] border-t border-black bg-[#26252d] pl-[14px] text-[#fbfbfe]">
          <Close className="size-3" />
          <div className="ml-px h-6 w-[200px] rounded border border-[#75747e] bg-[#3f3d49] pl-2 text-[12px] leading-[22px]">block</div>
        </div>
      </BrowserWindow>

      <BrowserWindow
        className="left-[72px] top-[219px] h-[1002px] w-[1792px] rounded-[10px] shadow-[0_0_1px_1px_rgba(0,0,0,0.25),0_12px_32px_rgba(0,0,0,0.35)]"
        url="192.168.178.66:31725"
        tabs={[{ title: "Welcome to nginx!", selected: true }]}
      >
        <NginxPage />
      </BrowserWindow>

      <BrowserWindow
        active
        className="left-[181px] top-[409px] h-[1002px] w-[1920px] rounded-[10px] shadow-[0_0_1px_1px_rgba(0,0,0,0.3),0_20px_50px_rgba(0,0,0,0.5)]"
        url="192.168.178.76:31725"
        tabs={[{ title: "Welcome to nginx!", selected: true }]}
      >
        <NginxPage />
      </BrowserWindow>

      <nav className="absolute left-[312px] top-[1027px] flex h-[50px] w-[1296px] rounded-[14px] border border-[#b7b4b5] bg-[#a6a2a3] pl-[3px] pt-[6px] shadow-[0_2px_44px_rgba(0,0,0,0.3)]">
        <DockGroup items={apps} />
        <Divider />
        <DockGroup items={extras} />
        <Divider />
        <DockGroup items={stacks} />
      </nav>
    </div>
  );
}
